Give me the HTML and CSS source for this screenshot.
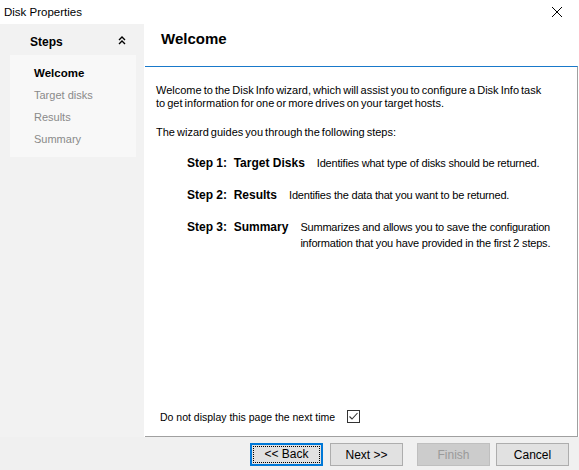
FILE: index.html
```html
<!DOCTYPE html>
<html lang="en">
<head>
    <meta charset="UTF-8">
    <title>Disk Properties</title>
    <link rel="stylesheet" href="styles.css">
</head>
<body>
    <div id="dialog">
        <header class="titlebar">
            <div class="caption">Disk Properties</div>
            <div class="close">
                <svg width="12" height="12" viewBox="0 0 12 12">
                    <path d="M1 1L11 11M11 1L1 11" stroke="#000" stroke-width="1" fill="none"/>
                </svg>
            </div>
        </header>
        <section class="body">
            <aside class="sidebar">
                <div class="steps-head">
                    <span>Steps</span>
                    <svg width="8" height="9" viewBox="0 0 8 9">
                        <path d="M1 4L4 1L7 4M1 8L4 5L7 8" stroke="#000" stroke-width="1.4" fill="none"/>
                    </svg>
                </div>
                <ul class="steps-list">
                    <li class="active">Welcome</li>
                    <li>Target disks</li>
                    <li>Results</li>
                    <li>Summary</li>
                </ul>
            </aside>
            <main class="page">
                <div class="page-head">Welcome</div>
                <div class="page-content">
                    <p class="intro">Welcome to the Disk Info wizard, which will assist you to configure a Disk Info task<br>to get information for one or more drives on your target hosts.</p>
                    <p class="guide">The wizard guides you through the following steps:</p>
                    <div class="step">
                        <b>Step 1:&nbsp; Target Disks</b>
                        <span>Identifies what type of disks should be returned.</span>
                    </div>
                    <div class="step">
                        <b>Step 2:&nbsp; Results</b>
                        <span>Identifies the data that you want to be returned.</span>
                    </div>
                    <div class="step">
                        <b>Step 3:&nbsp; Summary</b>
                        <span>Summarizes and allows you to save the configuration<br>information that you have provided in the first 2 steps.</span>
                    </div>
                    <label class="dont-show">
                        Do not display this page the next time
                        <span class="check">
                            <svg width="11" height="11" viewBox="0 0 11 11">
                                <path d="M1.5 5.5L4 8L9.5 2" stroke="#333" stroke-width="1.1" fill="none"/>
                            </svg>
                        </span>
                    </label>
                </div>
            </main>
        </section>
        <footer class="buttons">
            <button class="btn focused"><span>&lt;&lt; Back</span></button>
            <button class="btn next">Next &gt;&gt;</button>
            <button class="btn disabled">Finish</button>
            <button class="btn cancel">Cancel</button>
        </footer>
    </div>
</body>
</html>
```

FILE: styles.css
```css
* {
    box-sizing: border-box;
}

html, body {
    margin: 0;
    height: 100%;
    background-color: #f0f0f0;
    font-family: 'Liberation Sans', Arial, sans-serif;
    font-size: 11px;
    color: #000;
}

#dialog {
    display: flex;
    flex-direction: column;
    width: 579px;
    height: 470px;
}

.titlebar {
    height: 24px;
    background: #fff;
    display: flex;
    align-items: center;
    justify-content: space-between;
    padding-left: 4px;
    padding-right: 16px;
}
.titlebar .caption {
    font-size: 11.5px;
}
.titlebar .close {
    display: flex;
}

.body {
    flex: auto;
    display: flex;
}

.sidebar {
    flex: none;
    width: 144px;
    background: #f2f2f2;
    padding-left: 10px;
    padding-right: 8px;
}
.steps-head {
    height: 31px;
    display: flex;
    align-items: center;
    justify-content: space-between;
    padding-top: 5px;
    padding-left: 20px;
    padding-right: 10px;
    font-weight: bold;
    font-size: 12px;
}
.steps-head svg {
    margin-top: -3px;
}
.steps-list {
    list-style: none;
    margin: 0;
    padding: 7px 0 7px 24px;
    background: #f8f8f8;
}
.steps-list li {
    height: 22px;
    line-height: 22px;
    color: #8a8a8a;
}
.steps-list li.active {
    color: #000;
    font-weight: bold;
    font-size: 11.5px;
}

.page {
    flex: auto;
    min-width: 0;
    display: flex;
    flex-direction: column;
    background: #fff;
    white-space: nowrap;
}
.page-head {
    height: 42px;
    padding: 6px 0 0 17px;
    font-weight: bold;
    font-size: 15px;
}
.page-content {
    flex: auto;
    display: flex;
    flex-direction: column;
    margin-left: 1px;
    margin-right: 1px;
    border-top: 1px solid #1979ca;
    border-right: 1px solid #a0a0a0;
    border-bottom: 1px solid #a0a0a0;
    padding: 17px 10px 10px 11px;
}
.page-content p {
    margin: 0 0 16px;
    line-height: 13px;
}
.page-content p.intro {
    word-spacing: -1px;
}
.page-content p.guide {
    word-spacing: -1px;
}

.step {
    display: flex;
    padding-left: 31px;
    margin-bottom: 16px;
    line-height: 16px;
}
.step b {
    flex: none;
    font-size: 12px;
    margin-right: 12px;
}
.step span {
    letter-spacing: -0.2px;
}

.dont-show {
    margin-top: auto;
    display: flex;
    align-items: center;
    gap: 12px;
    padding-left: 4px;
    padding-bottom: 3px;
    font-size: 10.5px;
}
.check {
    width: 13px;
    height: 13px;
    border: 1px solid #333;
    display: flex;
    align-items: center;
    justify-content: center;
}

.buttons {
    height: 33px;
    display: flex;
    justify-content: flex-end;
    padding: 6px 10px 0 0;
}
.btn {
    width: 73px;
    height: 23px;
    border: 1px solid #adadad;
    background: #e1e1e1;
    font-family: inherit;
    font-size: 12px;
    color: #000;
    padding: 0;
}
.btn.focused {
    border: 2px solid #0078d7;
    padding: 1px;
}
.btn.focused span {
    display: block;
    height: 100%;
    line-height: 15px;
    border: 1px dotted #000;
}
.btn.next {
    margin-left: 7px;
}
.btn.disabled {
    margin-left: 14px;
    background: #cccccc;
    border-color: #bfbfbf;
    color: #9a9a9a;
}
.btn.cancel {
    margin-left: 6px;
}
```
